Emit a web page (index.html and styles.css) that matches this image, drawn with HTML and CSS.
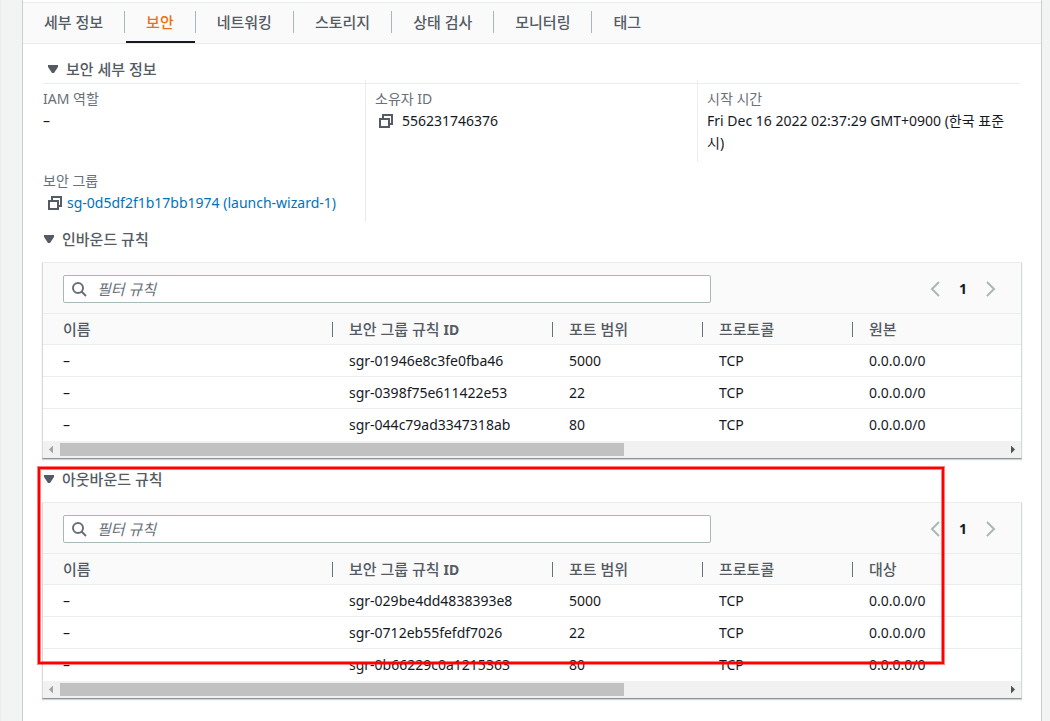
FILE: index.html
```html
<!DOCTYPE html>
<html lang="ko">
<head>
<meta charset="utf-8">
<title>보안</title>
<link rel="stylesheet" href="styles.css">
</head>
<body>
<svg class="defs" aria-hidden="true">
  <symbol id="copy" viewBox="0 0 16 16"><path d="M2 6h9v8H2zM5 6V2h9v9h-3" fill="none" stroke="currentColor" stroke-width="2"/></symbol>
  <symbol id="search" viewBox="0 0 16 16"><circle cx="7" cy="7" r="5" fill="none" stroke="currentColor" stroke-width="2"/><path d="M10.500 10.500l4.500 4.500" stroke="currentColor" stroke-width="2"/></symbol>
  <symbol id="prev" viewBox="0 0 16 16"><path d="M12 1L5 8l7 7" fill="none" stroke="currentColor" stroke-width="2"/></symbol>
  <symbol id="next" viewBox="0 0 16 16"><path d="M4 1l7 7-7 7" fill="none" stroke="currentColor" stroke-width="2"/></symbol>
  <symbol id="caret" viewBox="0 0 10 8"><path d="M0 0h10v2L6 8H4L0 2z" fill="currentColor"/></symbol>
</svg>
<main class="panel">
  <nav class="tabs">
    <button class="tab">세부 정보</button>
    <button class="tab active">보안</button>
    <button class="tab">네트워킹</button>
    <button class="tab">스토리지</button>
    <button class="tab">상태 검사</button>
    <button class="tab">모니터링</button>
    <button class="tab">태그</button>
  </nav>
  <div class="content">
    <h2 class="details-title"><button class="toggle"><svg class="caret"><use href="#caret"/></svg>보안 세부 정보</button></h2>
    <div class="details">
      <div class="cell"><div class="label">IAM 역할</div><div>–</div></div>
      <div class="cell ruled"><div class="label">소유자 ID</div><div class="copyable wide"><button class="icon-button" aria-label="복사"><svg class="icon"><use href="#copy"/></svg></button>556231746376</div></div>
      <div class="cell ruled"><div class="label">시작 시간</div><div>Fri Dec 16 2022 02:37:29 GMT+0900 (한국 표준시)</div></div>
      <div class="cell"><div class="label">보안 그룹</div><div class="copyable"><button class="icon-button" aria-label="복사"><svg class="icon"><use href="#copy"/></svg></button><a class="link" href="#sg">sg-0d5df2f1b17bb1974 (launch-wizard-1)</a></div></div>
      <div class="cell ruled"></div>
    </div>

    <section class="rules">
      <h2 class="rules-title"><button class="toggle"><svg class="caret"><use href="#caret"/></svg>인바운드 규칙</button></h2>
      <div class="card">
        <div class="toolbar">
          <label class="filter"><svg class="icon"><use href="#search"/></svg><input class="filter-input" type="text" placeholder="필터 규칙" aria-label="필터 규칙"></label>
          <div class="pager"><button class="icon-button" aria-label="이전"><svg class="icon"><use href="#prev"/></svg></button><button class="page">1</button><button class="icon-button" aria-label="다음"><svg class="icon"><use href="#next"/></svg></button></div>
        </div>
        <table class="table">
          <colgroup><col class="col-name"><col class="col-id"><col class="col-mid"><col class="col-mid"><col></colgroup>
          <thead><tr><th>이름</th><th>보안 그룹 규칙 <b>ID</b></th><th>포트 범위</th><th>프로토콜</th><th>원본</th></tr></thead>
          <tbody>
            <tr><td>–</td><td>sgr-01946e8c3fe0fba46</td><td>5000</td><td>TCP</td><td>0.0.0.0/0</td></tr>
            <tr><td>–</td><td>sgr-0398f75e611422e53</td><td>22</td><td>TCP</td><td>0.0.0.0/0</td></tr>
            <tr><td>–</td><td>sgr-044c79ad3347318ab</td><td>80</td><td>TCP</td><td>0.0.0.0/0</td></tr>
          </tbody>
        </table>
        <div class="scrollbar"><span class="arrow left"></span><div class="track"><div class="thumb"></div></div><span class="arrow right"></span></div>
      </div>
    </section>

    <section class="rules">
      <h2 class="rules-title"><button class="toggle"><svg class="caret"><use href="#caret"/></svg>아웃바운드 규칙</button></h2>
      <div class="card">
        <div class="toolbar">
          <label class="filter"><svg class="icon"><use href="#search"/></svg><input class="filter-input" type="text" placeholder="필터 규칙" aria-label="필터 규칙"></label>
          <div class="pager"><button class="icon-button" aria-label="이전"><svg class="icon"><use href="#prev"/></svg></button><button class="page">1</button><button class="icon-button" aria-label="다음"><svg class="icon"><use href="#next"/></svg></button></div>
        </div>
        <table class="table">
          <colgroup><col class="col-name"><col class="col-id"><col class="col-mid"><col class="col-mid"><col></colgroup>
          <thead><tr><th>이름</th><th>보안 그룹 규칙 <b>ID</b></th><th>포트 범위</th><th>프로토콜</th><th>대상</th></tr></thead>
          <tbody>
            <tr><td>–</td><td>sgr-029be4dd4838393e8</td><td>5000</td><td>TCP</td><td>0.0.0.0/0</td></tr>
            <tr><td>–</td><td>sgr-0712eb55fefdf7026</td><td>22</td><td>TCP</td><td>0.0.0.0/0</td></tr>
            <tr><td>–</td><td>sgr-0b66229c0a1215363</td><td>80</td><td>TCP</td><td>0.0.0.0/0</td></tr>
          </tbody>
        </table>
        <div class="scrollbar"><span class="arrow left"></span><div class="track"><div class="thumb"></div></div><span class="arrow right"></span></div>
      </div>
      <div class="highlight"></div>
    </section>
  </div>
</main>
</body>
</html>
```
FILE: styles.css
```css
* { box-sizing: border-box; }
body {
  margin: 0;
  background: #f2f3f3;
  border-left: 1px solid #eaeded;
  color: #16191f;
  font: 14px/22px "Noto Sans", "Noto Sans CJK KR", sans-serif;
}
button { margin: 0; padding: 0; border: 0; background: none; color: inherit; font: inherit; cursor: pointer; }
.defs { position: absolute; width: 0; height: 0; }
.panel {
  min-height: 100vh;
  margin: 0 8px 0 21px;
  padding-top: 2px;
  border: solid #c9cfcf;
  border-width: 0 1px;
  background: #fff;
}

.tabs {
  display: flex;
  align-items: stretch;
  height: 42px;
  border: solid #eaeded;
  border-width: 1px 0;
  background: #fafafa;
  color: #545b64;
  font-size: 15px;
  font-weight: 500;
}
.tab { display: flex; align-items: center; border-bottom: 2px solid transparent; }
.tab::before, .tab::after { content: ""; width: 21px; height: 22px; }
.tab:not(:last-child)::after { border-right: 1px solid #aab7b8; }
.tab.active {
  color: #ec7211;
  background: linear-gradient(#16191f, #16191f) 1px 100% / calc(100% - 2px) 2px no-repeat border-box;
}

.content { padding: 14px 19px 0; }
h2 { margin: 0; font-size: 15px; line-height: 22px; font-weight: 500; color: #545b64; }
.toggle { display: flex; align-items: center; gap: 8px; }
.caret { width: 10px; height: 8px; }
.details-title { margin: 0 2px 0 1px; padding: 0 0 3px 5px; border-bottom: 1px solid #eaeded; }
.details {
  display: grid;
  grid-template-columns: repeat(3, 1fr);
  margin: -4px -7px -3px -9px;
}
.cell { padding: 8px 16px 8px 9px; border-left: 1px solid transparent; }
.ruled { border-left-color: #eaeded; }
.label { color: #687078; }
.copyable { display: flex; align-items: center; gap: 4px; padding-left: 4px; }
.wide { padding-left: 3px; gap: 8px; }
.icon { display: block; width: 16px; height: 16px; }
.icon-button { color: #545b64; }
.link { color: #0073bb; text-decoration: none; }

.rules { position: relative; }
.rules-title { padding: 9px 1px 12px 2px; }
.card {
  border: 1px solid #d5dbdb;
  border-top-color: #eaeded;
  border-bottom-color: #879596;
  box-shadow: 0 1px 1px #001c2430;
}
.toolbar {
  display: flex;
  align-items: center;
  justify-content: space-between;
  padding: 12px 22px 10px 20px;
  border-bottom: 1px solid #eaeded;
  background: #fafafa;
}
.filter {
  display: flex;
  align-items: center;
  flex: 0 1 648px;
  gap: 10px;
  height: 28px;
  padding: 0 7px;
  border: 1px solid #aab7b8;
  border-radius: 2px;
  background: #fff;
  color: #687078;
}
.filter-input { flex: 1; min-width: 0; padding: 0; border: 0; outline: 0; background: none; font: inherit; font-size: 15px; }
.filter-input::placeholder { color: #687078; font-style: italic; opacity: 1; }
.pager { display: flex; align-items: center; gap: 16px; }
.pager .icon-button { color: #aab7b8; }
.page { width: 8px; font-weight: 700; }

.table { width: 100%; table-layout: fixed; border-collapse: separate; border-spacing: 0; }
.col-name { width: 290px; }
.col-id { width: 220px; }
.col-mid { width: 150px; }
th, td { padding: 5px 0 4px 16px; text-align: left; }
th:first-child, td:first-child { padding-left: 20px; }
th {
  padding: 4px 0;
  padding-left: 16px;
  border-bottom: 1px solid #eaeded;
  background: linear-gradient(#687078, #687078) 100% 8px / 1px 15px no-repeat #fafafa;
  color: #545b64;
  font-size: 15px;
  font-weight: 500;
}
th b { font-size: 14px; line-height: 1; }
th:last-child { background: #fafafa; }
td { border-bottom: 1px solid #eaeded; }
tr:last-child td { border-bottom-color: transparent; }

.scrollbar { display: flex; align-items: center; height: 17px; background: #f1f1f1; }
.arrow { flex: none; width: 17px; height: 8px; background: #a3a3a3; clip-path: polygon(6px 4px, 10px 0, 10px 8px); }
.right { background: #505050; clip-path: polygon(7px 0, 11px 4px, 7px 8px); }
.track { flex: 1; }
.thumb { width: 59.7%; height: 13px; background: #c1c1c1; }

.highlight {
  position: absolute;
  top: 8px;
  left: -4px;
  right: 78px;
  height: 197px;
  border: 2px solid #f00;
  box-shadow: 0 0 0 1px #ff000080, inset 0 0 0 1px #ff000080;
  pointer-events: none;
}
```
